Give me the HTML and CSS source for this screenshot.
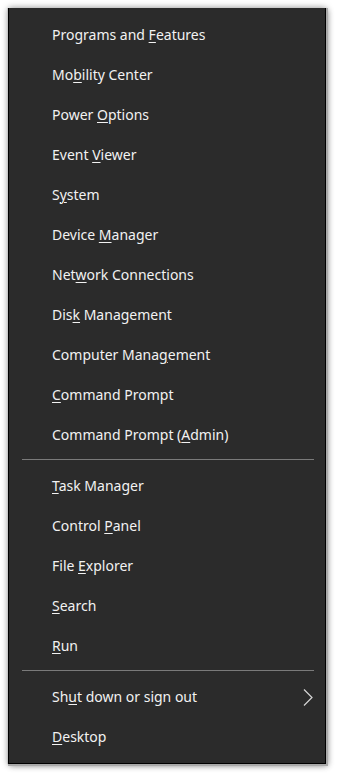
FILE: index.html
```html
<!DOCTYPE html>
<html>
<head>
<meta charset="utf-8">
<link rel="stylesheet" href="styles.css">
</head>
<body>
<div class="menu">
  <ul class="group">
    <li class="item"><span class="label">Programs and <span class="k">F</span>eatures</span></li>
    <li class="item"><span class="label">Mo<span class="k">b</span>ility Center</span></li>
    <li class="item"><span class="label">Power <span class="k">O</span>ptions</span></li>
    <li class="item"><span class="label">Event <span class="k">V</span>iewer</span></li>
    <li class="item"><span class="label">S<span class="k">y</span>stem</span></li>
    <li class="item"><span class="label">Device <span class="k">M</span>anager</span></li>
    <li class="item"><span class="label">Net<span class="k">w</span>ork Connections</span></li>
    <li class="item"><span class="label">Dis<span class="k">k</span> Management</span></li>
    <li class="item"><span class="label">Computer Mana<span class="k">g</span>ement</span></li>
    <li class="item"><span class="label"><span class="k">C</span>ommand Prompt</span></li>
    <li class="item"><span class="label">Command Prompt (<span class="k">A</span>dmin)</span></li>
  </ul>
  <div class="sep"></div>
  <ul class="group">
    <li class="item"><span class="label"><span class="k">T</span>ask Manager</span></li>
    <li class="item"><span class="label">Control <span class="k">P</span>anel</span></li>
    <li class="item"><span class="label">File <span class="k">E</span>xplorer</span></li>
    <li class="item"><span class="label"><span class="k">S</span>earch</span></li>
    <li class="item"><span class="label"><span class="k">R</span>un</span></li>
  </ul>
  <div class="sep"></div>
  <ul class="group">
    <li class="item sub"><span class="label">Sh<span class="k">u</span>t down or sign out</span><svg class="chev" width="10" height="17" viewBox="0 0 10 17"><path d="M1 0.5 L9 8.5 L1 16.5" fill="none" stroke="#d6d6d6" stroke-width="1.2"/></svg></li>
    <li class="item"><span class="label"><span class="k">D</span>esktop</span></li>
  </ul>
</div>
</body>
</html>
```
FILE: styles.css
```css
html, body {
  margin: 0;
  padding: 0;
  background: #ffffff;
}
body {
  padding: 8px 0 0 8px;
  width: 337px;
  height: 776px;
  box-sizing: border-box;
}
.menu {
  width: 318px;
  height: 756px;
  box-sizing: border-box;
  background: #2b2b2b;
  padding: 7px 0 0 0;
  box-shadow:
    inset 1px 0 0 #000,
    inset -1px 0 0 #000,
    inset 0 -1px 0 #000,
    -1px 0 0 #c4c4c4,
    2px 0 0 #a9a9a9,
    0 2px 0 #a9a9a9,
    2px 2px 0 #a9a9a9,
    0 0 7px rgba(0, 0, 0, 0.35),
    2px 2px 6px rgba(0, 0, 0, 0.3);
  font-family: "Noto Sans", "Open Sans", sans-serif;
  font-size: 14px;
  color: #f2f2f2;
}
.group {
  list-style: none;
  margin: 0;
  padding: 0;
}
.item {
  height: 40px;
  display: flex;
  align-items: center;
  padding-left: 44px;
  white-space: pre;
}
.label {
  position: relative;
  top: -1px;
}
.sub {
  justify-content: space-between;
  padding-right: 13px;
}
.k {
  text-decoration: underline;
  text-underline-offset: 2px;
  text-decoration-thickness: 1px;
}
.sep {
  height: 1px;
  background: #7a7a7a;
  margin: 4px 12px 6px 14px;
}
.chev {
  display: block;
}
```
